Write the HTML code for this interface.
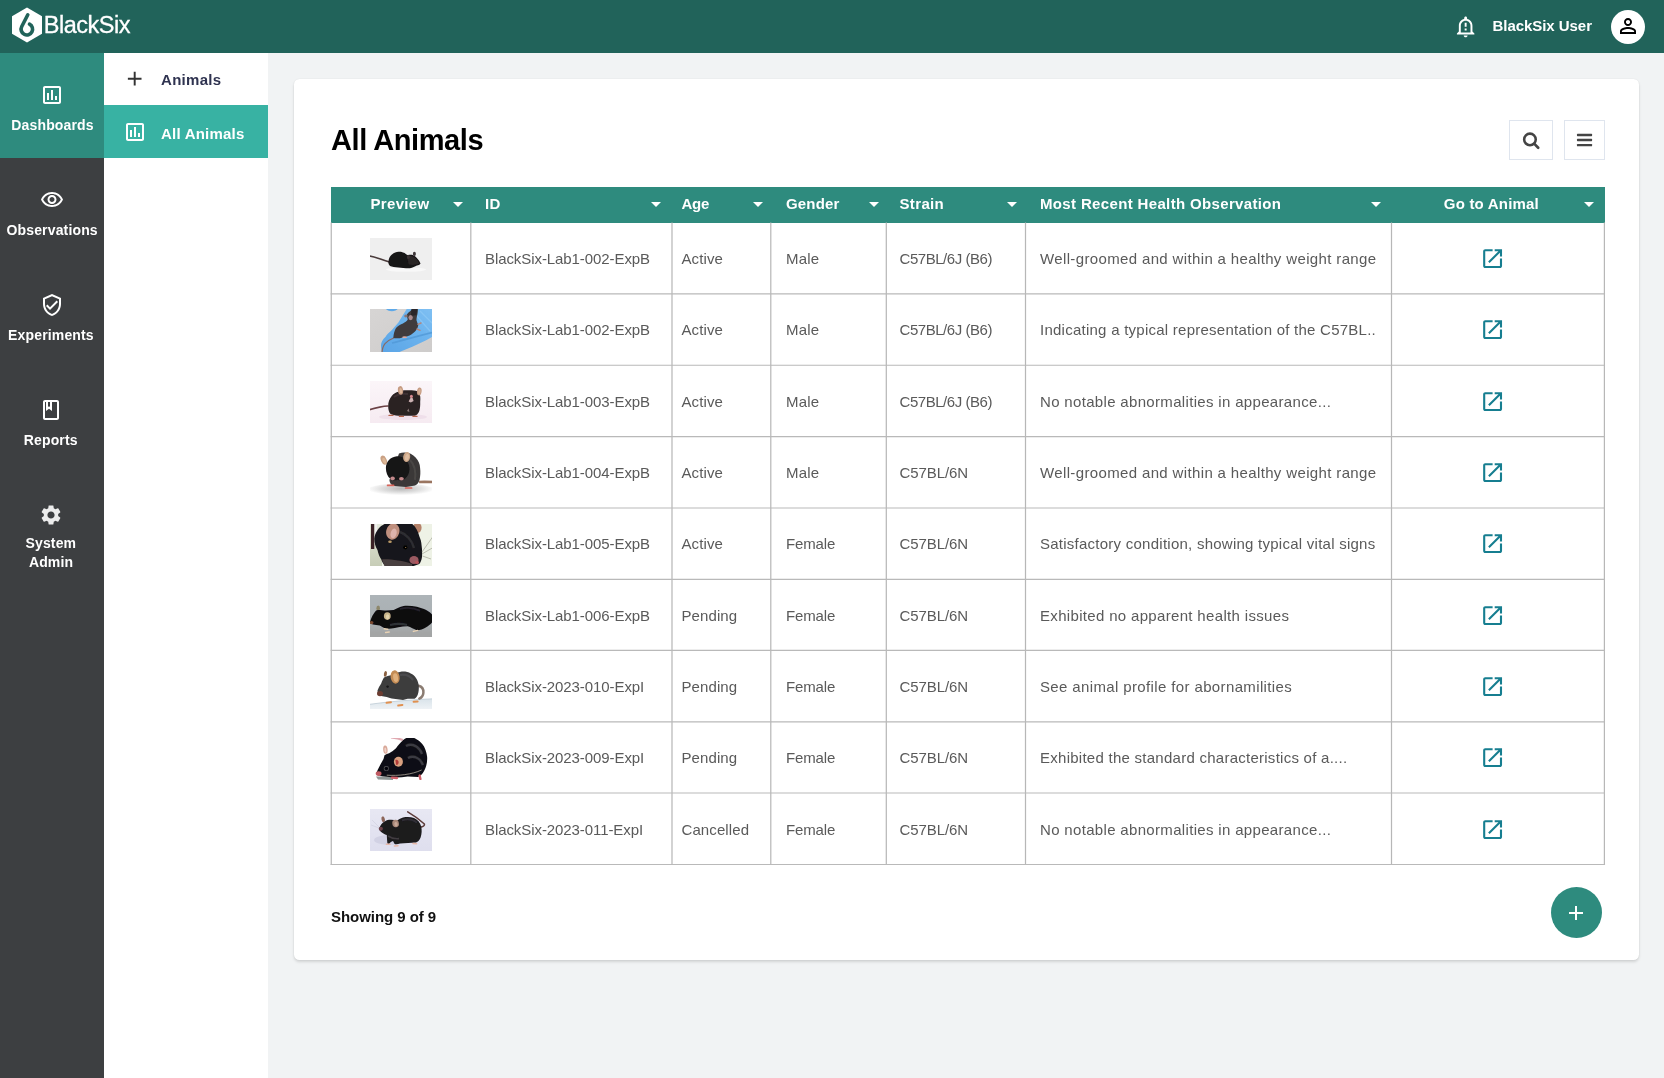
<!DOCTYPE html>
<html lang="en">
<head>
<meta charset="utf-8">
<title>BlackSix - All Animals</title>
<style>
*{box-sizing:border-box;margin:0;padding:0}
html,body{width:1664px;height:1078px;overflow:hidden}
body{background:#f1f3f4;font-family:"Liberation Sans","DejaVu Sans",sans-serif;color:#555;position:relative}
.abs{position:absolute}
body>*{opacity:.999}
/* top bar */
#top{position:absolute;left:0;top:0;width:1664px;height:52.5px;background:#21635a}
#brand{position:absolute;left:43.8px;top:10px;font-size:23.5px;line-height:30px;color:#fff;letter-spacing:-.5px;white-space:nowrap;-webkit-text-stroke:.3px #fff}
#user{position:absolute;left:1492.5px;top:14.7px;font-size:15px;line-height:22px;font-weight:bold;color:#fff;white-space:nowrap;letter-spacing:-.05px}
#avatar{position:absolute;left:1610.7px;top:9.8px;width:34px;height:34px;border-radius:50%;background:#fff}
/* left rail */
#rail{position:absolute;left:0;top:52.5px;width:103.5px;height:1026px;background:#3d3f41}
.ri{position:absolute;left:0;width:103.5px;height:105.1px;color:#fff;text-align:center;font-weight:bold;font-size:14px}
.ri.on{background:#2e8b7e}
.ri svg{position:absolute;left:50%;transform:translateX(-50%)}
.ri span{position:absolute;left:.8px;width:103.5px;text-align:center;line-height:19px;white-space:nowrap;letter-spacing:.15px}
/* sub nav */
#sub{position:absolute;left:103.5px;top:52.5px;width:164.5px;height:1026px;background:#fff}
.si{position:absolute;left:0;width:164.5px;height:52.9px;font-weight:bold;font-size:15px;color:#2f3350}
.si.on{background:#38b2a3;color:#fff}
.si span{position:absolute;left:57.5px;top:17px;line-height:22px;white-space:nowrap;letter-spacing:.3px}
/* card */
#card{position:absolute;left:294px;top:79.25px;width:1344.6px;height:881px;background:#fff;border-radius:5.5px;box-shadow:0 2px 3px rgba(0,0,0,.13),0 0 1.5px rgba(0,0,0,.10)}
#title{position:absolute;left:331px;top:120.5px;font-size:29px;line-height:38px;font-weight:bold;color:#000;letter-spacing:-.43px;white-space:nowrap}
.btn{position:absolute;top:120px;height:39.5px;border:1px solid #dfe5ee;background:#fff}
/* table */
#thead{position:absolute;left:330.6px;top:186.5px;width:1274.3px;height:36.3px;background:#2e8b7e}
.th{position:absolute;top:186px;height:36.5px;line-height:35px;color:#fff;font-weight:bold;font-size:15px;white-space:nowrap;letter-spacing:.35px}
.car{position:absolute;top:201.5px;width:0;height:0;border-left:5px solid transparent;border-right:5px solid transparent;border-top:5px solid #fff}
.vl{position:absolute;top:222.5px;width:1px;height:642.3px;background:#b9b9b9}
.hl{position:absolute;left:330.8px;width:1274.1px;height:1px;background:#b9b9b9}
.td{position:absolute;font-size:15px;line-height:22px;color:#5a5a5a;white-space:nowrap}
.th svg,.td svg{display:block}
.thumb{position:absolute;left:370px;width:61.8px;height:42.4px;overflow:hidden}
.go{position:absolute;left:1480px;width:25.2px;height:25.2px}
#showing{position:absolute;left:331px;top:905.6px;font-size:15px;line-height:22px;font-weight:bold;color:#111;white-space:nowrap;letter-spacing:-.05px}
#fab{position:absolute;left:1550.6px;top:886.7px;width:51.4px;height:51.4px;border-radius:50%;background:#2e8b7e}
</style>
</head>
<body>
<div id="top">
  <svg class="abs" style="left:11.35px;top:6px" width="32" height="38" viewBox="0 0 32 38"><polygon points="16,1.5 31,10.2 31,27.8 16,36.5 1,27.8 1,10.2" fill="#fff"/><path d="M16.78 8.8 L10.75 20.5 A5.75 5.75 0 1 0 18.5 18.1" fill="none" stroke="#21635a" stroke-width="3.6" stroke-linecap="round" stroke-linejoin="round"/></svg>
  <div id="brand">BlackSix</div>
  <svg width="23.3" height="23.3" viewBox="0 0 24 24" style="position:absolute;left:1453.7px;top:15px"><path fill="#fff" d="M10.01 21.01c0 1.1.89 1.99 1.99 1.99s1.99-.89 1.99-1.99h-3.98zM12 6c2.76 0 5 2.24 5 5v7H7v-7c0-2.76 2.24-5 5-5zm0-4.5c-.83 0-1.5.67-1.5 1.5v1.17C7.36 4.85 5 7.65 5 11v6l-2 2v1h18v-1l-2-2v-6c0-3.35-2.36-6.15-5.5-6.83V3c0-.83-.67-1.5-1.5-1.5zM11 8h2v4h-2zm0 6h2v2h-2z"/></svg>
  <div id="user">BlackSix User</div>
  <div id="avatar"><svg width="24" height="24" viewBox="0 0 24 24" style="position:absolute;left:5.2px;top:4.5px"><path fill="#000" d="M12 5.9c1.16 0 2.1.94 2.1 2.1s-.94 2.1-2.1 2.1S9.9 9.16 9.9 8s.94-2.1 2.1-2.1m0 9c2.97 0 6.1 1.46 6.1 2.1v1.1H5.9V17c0-.64 3.13-2.1 6.1-2.1M12 4C9.79 4 8 5.79 8 8s1.79 4 4 4 4-1.79 4-4-1.79-4-4-4zm0 9c-2.67 0-8 1.34-8 4v3h16v-3c0-2.66-5.33-4-8-4z"/></svg></div>
</div>
<div id="rail">
  <div class="ri on" style="top:0px"><svg width="24" height="24" viewBox="0 0 24 24" style="top:30.2px;margin-left:0px"><path fill="#fff" d="M9 17H7v-7h2v7zm4 0h-2V7h2v10zm4 0h-2v-4h2v4zm2 2H5V5h14v14zm0-16H5c-1.1 0-2 .9-2 2v14c0 1.1.9 2 2 2h14c1.1 0 2-.9 2-2V5c0-1.1-.9-2-2-2z"/></svg><span style="top:63.8px;left:0.8px">Dashboards</span></div>
<div class="ri" style="top:105px"><svg width="24" height="24" viewBox="0 0 24 24" style="top:30.2px;margin-left:0px"><path fill="#fff" d="M12 6c3.79 0 7.17 2.13 8.82 5.5C19.17 14.87 15.79 17 12 17s-7.17-2.13-8.82-5.5C4.83 8.13 8.21 6 12 6m0-2C7 4 2.73 7.11 1 11.5 2.73 15.89 7 19 12 19s9.27-3.11 11-7.5C21.27 7.11 17 4 12 4zm0 5c1.38 0 2.5 1.12 2.5 2.5S13.38 14 12 14s-2.5-1.12-2.5-2.5S10.62 9 12 9m0-2c-2.48 0-4.5 2.02-4.5 4.5S9.52 16 12 16s4.5-2.02 4.5-4.5S14.48 7 12 7z"/></svg><span style="top:63.8px;left:0.4px">Observations</span></div>
<div class="ri" style="top:210px"><svg width="24" height="24" viewBox="0 0 24 24" style="top:30.2px;margin-left:0px"><path fill="#fff" d="M12 1L3 5v6c0 5.55 3.84 10.74 9 12 5.16-1.26 9-6.45 9-12V5l-9-4zm7 10c0 4.52-2.98 8.69-7 9.93-4.02-1.24-7-5.41-7-9.93V6.3l7-3.11 7 3.11V11zm-11.59.59L6 13l4 4 8-8-1.41-1.42L10 14.17z"/></svg><span style="top:63.8px;left:-0.8px">Experiments</span></div>
<div class="ri" style="top:315px"><svg width="24" height="24" viewBox="0 0 24 24" style="top:30.2px;margin-left:-0.8px"><path fill="#fff" d="M18 2H6c-1.1 0-2 .9-2 2v16c0 1.1.9 2 2 2h12c1.1 0 2-.9 2-2V4c0-1.1-.9-2-2-2zM9 4h2v5l-1-.75L9 9V4zm9 16H6V4h1v9l3-2.25L13 13V4h5v16z"/></svg><span style="top:63.8px;left:-1.0px">Reports</span></div>
<div class="ri" style="top:420px"><svg width="24" height="24" viewBox="0 0 24 24" style="top:30.2px;margin-left:-0.7px"><path fill="#ececec" d="M19.14 12.94c.04-.3.06-.61.06-.94 0-.32-.02-.64-.07-.94l2.03-1.58c.18-.14.23-.41.12-.61l-1.92-3.32c-.12-.22-.37-.29-.59-.22l-2.39.96c-.5-.38-1.03-.7-1.62-.94l-.36-2.54c-.04-.24-.24-.41-.48-.41h-3.84c-.24 0-.43.17-.47.41l-.36 2.54c-.59.24-1.13.57-1.62.94l-2.39-.96c-.22-.08-.47 0-.59.22L2.74 8.87c-.12.21-.08.47.12.61l2.03 1.58c-.05.3-.09.63-.09.94s.02.64.07.94l-2.03 1.58c-.18.14-.23.41-.12.61l1.92 3.32c.12.22.37.29.59.22l2.39-.96c.5.38 1.03.7 1.62.94l.36 2.54c.05.24.24.41.48.41h3.84c.24 0 .44-.17.47-.41l.36-2.54c.59-.24 1.13-.56 1.62-.94l2.39.96c.22.08.47 0 .59-.22l1.92-3.32c.12-.22.07-.47-.12-.61l-2.01-1.58zM12 15.6c-1.98 0-3.6-1.62-3.6-3.6s1.62-3.6 3.6-3.6 3.6 1.62 3.6 3.6-1.62 3.6-3.6 3.6z"/></svg><span style="top:61.9px;left:-0.9px">System</span><span style="top:80.3px;left:-0.7px">Admin</span></div>

</div>
<div id="sub">
  <div class="si" style="top:0"><svg width="23.4" height="23.4" viewBox="0 0 24 24" style="position:absolute;left:19.5px;top:14.9px"><path fill="#333" d="M19 13h-6v6h-2v-6H5v-2h6V5h2v6h6v2z"/></svg><span style="top:16.2px">Animals</span></div>
<div class="si on" style="top:52.5px"><svg width="24" height="24" viewBox="0 0 24 24" style="position:absolute;left:19px;top:15px"><path fill="#fff" d="M9 17H7v-7h2v7zm4 0h-2V7h2v10zm4 0h-2v-4h2v4zm2 2H5V5h14v14zm0-16H5c-1.1 0-2 .9-2 2v14c0 1.1.9 2 2 2h14c1.1 0 2-.9 2-2V5c0-1.1-.9-2-2-2z"/></svg><span style="top:17.5px;letter-spacing:.22px">All Animals</span></div>

</div>
<div id="card"></div>
<div id="title">All Animals</div>
<div class="btn" style="left:1509.4px;width:43.3px"><svg width="24" height="24" viewBox="0 0 24 24" style="position:absolute;left:8.4px;top:6.3px"><circle cx="10.95" cy="12.4" r="5.8" fill="none" stroke="#444" stroke-width="2.55"/><path d="M15.4 16.9 L19.2 20.7" stroke="#444" stroke-width="2.7" stroke-linecap="round"/></svg></div>
<div class="btn" style="left:1564.4px;width:40.6px"><svg width="24" height="24" viewBox="0 0 24 24" style="position:absolute;left:6.9px;top:6.6px"><g fill="#444"><rect x="4.95" y="5.8" width="15.15" height="2.35" rx=".6"/><rect x="4.95" y="10.85" width="15.15" height="2.35" rx=".6"/><rect x="4.95" y="15.9" width="15.15" height="2.35" rx=".6"/></g></svg></div>
<div id="thead"></div>
<div class="th" style="left:370.4px;letter-spacing:0.35px">Preview</div><div class="car" style="left:453px"></div>
<div class="th" style="left:485px;letter-spacing:0.35px">ID</div><div class="car" style="left:651px"></div>
<div class="th" style="left:681.5px;letter-spacing:-0.3px">Age</div><div class="car" style="left:753px"></div>
<div class="th" style="left:786px;letter-spacing:0.18px">Gender</div><div class="car" style="left:868.5px"></div>
<div class="th" style="left:899.5px;letter-spacing:0.35px">Strain</div><div class="car" style="left:1006.5px"></div>
<div class="th" style="left:1040px;letter-spacing:0.35px">Most Recent Health Observation</div><div class="car" style="left:1371px"></div>
<div class="th" style="left:1443.8px;letter-spacing:0.2px">Go to Animal</div><div class="car" style="left:1583.5px"></div>
<svg class="abs" style="left:0;top:0;pointer-events:none" width="1664" height="1078" viewBox="0 0 1664 1078"><path d="M331.25 222.6V865.1M470.82 222.6V865.1M672.0 222.6V865.1M770.8 222.6V865.1M886.3 222.6V865.1M1025.5 222.6V865.1M1391.5 222.6V865.1M1604.4 222.6V865.1" fill="none" stroke="#b7b7b7" stroke-width="1.22"/><path d="M330.6 293.85H1605.0500000000002M330.6 365.25H1605.0500000000002M330.6 436.65H1605.0500000000002M330.6 508.0H1605.0500000000002M330.6 579.45H1605.0500000000002M330.6 650.3H1605.0500000000002M330.6 721.85H1605.0500000000002M330.6 793.0H1605.0500000000002M330.6 864.5H1605.0500000000002" fill="none" stroke="#b9b9b9" stroke-width="1.2"/></svg>
<div class="thumb" style="top:238.05px"><svg width="62" height="42.4" viewBox="0 0 62 42.4" preserveAspectRatio="none"><defs><filter id="b1" filterUnits="userSpaceOnUse" x="-6" y="-6" width="74" height="54.4"><feGaussianBlur stdDeviation="0.45"/></filter></defs><g filter="url(#b1)"><rect x="-6" y="-6" width="74" height="54.4" fill="#efefef"/><ellipse cx="36" cy="31.6" rx="20" ry="2.2" fill="#f8f8f8"/><path d="M-3 17.4 C6 18.6 11 21.6 18.8 23.8" fill="none" stroke="#4a3b3b" stroke-width="1.7" stroke-linecap="round"/><path d="M18.4 23.9 C18.6 20 20.6 17.6 22 16.6 C24 14.6 26.4 13.7 28.6 13.7 C30.6 13.6 32.6 14 34 14.8 C35.4 15.6 36.2 16.6 37.4 16.9 C39 17 41 16.6 42.6 16.9 C44.8 17.6 46.2 19.2 47.2 20.4 C48.8 22 50 24 50.5 25.6 C50.2 26.8 48.6 27.4 46.9 27.6 C45 28.8 42.6 29.8 40 30.2 C36 30.4 32 29.6 28.4 29.4 C25 29.2 22 28.8 20 27.9 C18.8 26.8 18.3 25.4 18.4 23.9Z" fill="#151214"/><path d="M37 18 C40 17.4 44 18.4 47 21.4 C48 23 49 24.6 49.6 25.6 C47 27 42 27.4 38.6 26.6Z" fill="#2a2526"/><ellipse cx="44.4" cy="15.9" rx="1.5" ry="2.1" fill="#3c3537"/><ellipse cx="38.4" cy="19" rx="1.6" ry="2" fill="#3a3133"/></g></svg></div><div class="td" style="left:485px;top:248.10px;letter-spacing:-.08px">BlackSix-Lab1-002-ExpB</div><div class="td" style="left:681.5px;top:248.10px;letter-spacing:.1px">Active</div><div class="td" style="left:786px;top:248.10px;letter-spacing:0.2px">Male</div><div class="td" style="left:899.5px;top:248.10px;letter-spacing:-0.45px">C57BL/6J (B6)</div><div class="td" style="left:1040px;top:248.10px;letter-spacing:0.36px">Well-groomed and within a healthy weight range</div><div class="go" style="top:245.85px"><svg width="25.2" height="25.2" viewBox="0 0 24 24" style=""><path fill="#167e90" d="M19 19H5V5h7V3H5c-1.11 0-2 .9-2 2v14c0 1.1.89 2 2 2h14c1.1 0 2-.9 2-2v-7h-2v7zM14 3v2h3.59l-9.83 9.83 1.41 1.41L19 6.41V10h2V3h-7z"/></svg></div>
<div class="thumb" style="top:309.42px"><svg width="62" height="42.4" viewBox="0 0 62 42.4" preserveAspectRatio="none"><defs><filter id="b2" filterUnits="userSpaceOnUse" x="-6" y="-6" width="74" height="54.4"><feGaussianBlur stdDeviation="0.45"/></filter><linearGradient id="g2" x1="0" y1="0" x2="1" y2="1"><stop offset="0" stop-color="#d8d6d5"/><stop offset="1" stop-color="#cdcbca"/></linearGradient><linearGradient id="gl2" x1="0" y1="1" x2="1" y2="0"><stop offset="0" stop-color="#5aa4e6"/><stop offset=".6" stop-color="#6db4ee"/><stop offset="1" stop-color="#84c3f4"/></linearGradient></defs><g filter="url(#b2)"><rect x="-6" y="-6" width="74" height="54.4" fill="url(#g2)"/><path d="M15.9 -3 L27.6 -3 L27.6 0 C26.6 2 19.6 3.6 15.9 0Z" fill="#5ea9e8"/><path d="M36.7 0 L38.5 -4 L67 -4 L67 25.4 L62 28 L56.2 31.2 L42.3 37.7 L30.7 42.4 L22 46.4 L11.9 46.4 L11.7 42.4 C10.9 39 10.9 36 11.2 34.4 C12 31.6 13.6 29.6 15.4 27.9 C17 25.4 19.4 23.2 21.9 21 C24 18.4 26.2 15.8 28.4 13.5 C31 9 34 4.4 36.7 0Z" fill="url(#gl2)"/><path d="M22 34 C32 31.6 48 27 66 22.6" fill="none" stroke="#4f97d6" stroke-width="1.6" opacity=".75"/><path d="M50 2 L62 14 M46 6 L60 22" stroke="#9ad0f8" stroke-width="1.2" opacity=".5"/><path d="M23.6 29 C20 30.4 17 32.4 15 34.6 C13 37 12 39.6 12 45" fill="none" stroke="#8a6a64" stroke-width="1.2" stroke-linecap="round"/><path d="M23.3 28.9 C23.6 25 24.6 21.6 26 19.1 C28 16.8 30.6 15.6 33 14.5 C35 13.4 36.8 12.2 37.7 10.8 C37.6 9.4 37.2 8.2 36.7 7 C36.2 6 37.6 4 40.4 1.9 L42.3 0 L42.3 -4 L47.9 -4 L47.9 0 C48 2 47.6 4 47.4 5.2 C47 7 46.4 9.4 46.5 11.2 C47 13 47.6 14.6 48.3 15.9 C48 17.6 47.6 19 46.9 20 C45.6 22 44 23.6 42.3 24.7 C40.6 26 38.6 27 36.7 27.5 C35 28.2 33.6 28.4 32.6 28.4 C29.6 29.4 26 29.6 23.3 28.9Z" fill="#3f3b3d"/><path d="M41.6 -3 L47.4 -3 L46.6 6 L41 7Z" fill="#2a2729"/><ellipse cx="40.6" cy="8.6" rx="2.2" ry="2.6" fill="#a88a8e"/><ellipse cx="35.9" cy="6.9" rx="1.7" ry="1.5" fill="#8a7478"/><path d="M48 15.4 L51 14 M47 20 L50 21.4" stroke="#b9857a" stroke-width="1.4" stroke-linecap="round"/><ellipse cx="34.6" cy="28.2" rx="2.4" ry=".9" fill="#d9a8a0"/></g></svg></div><div class="td" style="left:485px;top:319.40px;letter-spacing:-.08px">BlackSix-Lab1-002-ExpB</div><div class="td" style="left:681.5px;top:319.40px;letter-spacing:.1px">Active</div><div class="td" style="left:786px;top:319.40px;letter-spacing:0.2px">Male</div><div class="td" style="left:899.5px;top:319.40px;letter-spacing:-0.45px">C57BL/6J (B6)</div><div class="td" style="left:1040px;top:319.40px;letter-spacing:0.25px">Indicating a typical representation of the C57BL..</div><div class="go" style="top:317.21px"><svg width="25.2" height="25.2" viewBox="0 0 24 24" style=""><path fill="#167e90" d="M19 19H5V5h7V3H5c-1.11 0-2 .9-2 2v14c0 1.1.89 2 2 2h14c1.1 0 2-.9 2-2v-7h-2v7zM14 3v2h3.59l-9.83 9.83 1.41 1.41L19 6.41V10h2V3h-7z"/></svg></div>
<div class="thumb" style="top:380.79px"><svg width="62" height="42.4" viewBox="0 0 62 42.4" preserveAspectRatio="none"><defs><filter id="b3" filterUnits="userSpaceOnUse" x="-6" y="-6" width="74" height="54.4"><feGaussianBlur stdDeviation="0.45"/></filter><linearGradient id="g3" x1="0" y1="0" x2="0" y2="1"><stop offset="0" stop-color="#fcf7fa"/><stop offset="1" stop-color="#f5e9f0"/></linearGradient></defs><g filter="url(#b3)"><rect x="-6" y="-6" width="74" height="54.4" fill="url(#g3)"/><ellipse cx="33" cy="36" rx="24" ry="3" fill="#efdfea"/><path d="M-3 29.4 C5 27 11 25.2 18 25" fill="none" stroke="#6b4144" stroke-width="1.5" stroke-linecap="round"/><path d="M18.2 25.5 C18 21 19.6 17.4 21.9 14.8 C23.6 12.6 26 11.2 28.4 10.7 C32 9 36 9 40 9.3 C44 9 47.4 9.8 49 11.6 C50.4 14 50.6 17.6 50.2 20.9 C50.4 24 50 27.4 49.3 30.1 C48.4 32.6 46.6 34.4 44.6 34.8 L28.4 34.8 C25 34.6 22 33.8 20 32.5 C18.8 30.6 18.2 28 18.2 25.5Z" fill="#2b2123"/><path d="M24 16 C28 13 34 12.4 38 13" fill="none" stroke="#46383a" stroke-width="2" opacity=".7"/><ellipse cx="30.5" cy="9.4" rx="2.6" ry="4.3" fill="#c59b82" transform="rotate(-8 30.5 9.4)"/><ellipse cx="30.8" cy="9.8" rx="1.3" ry="2.8" fill="#ddb89c" transform="rotate(-8 30.8 9.8)"/><ellipse cx="49.3" cy="10.4" rx="2.3" ry="4" fill="#c59b82" transform="rotate(8 49.3 10.4)"/><ellipse cx="49.4" cy="10.6" rx="1.1" ry="2.6" fill="#d8b096" transform="rotate(8 49.4 10.6)"/><ellipse cx="41.4" cy="15.4" rx="1.5" ry="1.7" fill="#d88a90"/><path d="M38.6 20.4 L40.6 16.8 L42.6 17 L43.6 20 L40.8 21.6Z" fill="#cdb3b3"/><path d="M37 30 L38.6 27.6 L39.4 31Z" fill="#8a7878"/><path d="M19 34.4 h4 M29.4 35.4 h4 M43 35.4 h4" stroke="#b4644c" stroke-width="1.3" stroke-linecap="round"/></g></svg></div><div class="td" style="left:485px;top:390.70px;letter-spacing:-.08px">BlackSix-Lab1-003-ExpB</div><div class="td" style="left:681.5px;top:390.70px;letter-spacing:.1px">Active</div><div class="td" style="left:786px;top:390.70px;letter-spacing:0.2px">Male</div><div class="td" style="left:899.5px;top:390.70px;letter-spacing:-0.45px">C57BL/6J (B6)</div><div class="td" style="left:1040px;top:390.70px;letter-spacing:0.33px">No notable abnormalities in appearance...</div><div class="go" style="top:388.57px"><svg width="25.2" height="25.2" viewBox="0 0 24 24" style=""><path fill="#167e90" d="M19 19H5V5h7V3H5c-1.11 0-2 .9-2 2v14c0 1.1.89 2 2 2h14c1.1 0 2-.9 2-2v-7h-2v7zM14 3v2h3.59l-9.83 9.83 1.41 1.41L19 6.41V10h2V3h-7z"/></svg></div>
<div class="thumb" style="top:452.16px"><svg width="62" height="42.4" viewBox="0 0 62 42.4" preserveAspectRatio="none"><defs><filter id="b4" filterUnits="userSpaceOnUse" x="-6" y="-6" width="74" height="54.4"><feGaussianBlur stdDeviation="0.45"/></filter><radialGradient id="s4" cx=".5" cy=".4" r=".5"><stop offset="0" stop-color="#b8b8b8"/><stop offset=".55" stop-color="#dedede"/><stop offset="1" stop-color="#ffffff"/></radialGradient></defs><g filter="url(#b4)"><rect x="-6" y="-6" width="74" height="54.4" fill="#ffffff"/><ellipse cx="31" cy="38" rx="34" ry="6.5" fill="url(#s4)"/><path d="M49 30 C53 29.6 58 29.8 66 30.1" fill="none" stroke="#9a7560" stroke-width="2.7"/><path d="M29 1.4 C35 -.8 42 1 45.6 5.6 C48.6 9 49.9 12 50.1 16 C50.6 20 50.4 24 49.6 27.6 C48.8 30.6 47.6 32.4 45 33.6 L36 35 L24 34 C21 33 19.6 31 19.4 28Z" fill="#3a3838"/><path d="M40 8 C44 12 46 20 45 28" fill="none" stroke="#55504e" stroke-width="2" opacity=".6"/><ellipse cx="13.8" cy="8.2" rx="2.8" ry="4.8" fill="#c9a184" transform="rotate(-24 13.8 8.2)"/><ellipse cx="14.3" cy="8.8" rx="1.5" ry="3.2" fill="#ddb897" transform="rotate(-24 14.3 8.8)"/><path d="M15.9 16 C15.9 10 20.4 4.6 27 4.2 C33.6 4 39 9 39.4 15.6 C39.8 21 37.6 25.4 34 27.4 C31.6 28.6 29 28.6 27.4 27.8 C25.6 28.6 22.6 28.6 20.6 27 C17.4 24.6 15.9 20.4 15.9 16Z" fill="#161417"/><ellipse cx="36.7" cy="5" rx="3.5" ry="5" fill="#cda788" transform="rotate(10 36.7 5)"/><ellipse cx="37" cy="5.4" rx="1.9" ry="3.4" fill="#dfbea2" transform="rotate(10 37 5.4)"/><ellipse cx="22.6" cy="26.4" rx="2.3" ry="1.8" fill="#c48a8c"/><ellipse cx="31.4" cy="26.8" rx="2.4" ry="1.8" fill="#c48a8c"/><path d="M17.6 33.4 h6 M35.6 36 h6" stroke="#d9655a" stroke-width="1.7" stroke-linecap="round"/></g></svg></div><div class="td" style="left:485px;top:462.00px;letter-spacing:-.08px">BlackSix-Lab1-004-ExpB</div><div class="td" style="left:681.5px;top:462.00px;letter-spacing:.1px">Active</div><div class="td" style="left:786px;top:462.00px;letter-spacing:0.2px">Male</div><div class="td" style="left:899.5px;top:462.00px;letter-spacing:-0.08px">C57BL/6N</div><div class="td" style="left:1040px;top:462.00px;letter-spacing:0.36px">Well-groomed and within a healthy weight range</div><div class="go" style="top:459.93px"><svg width="25.2" height="25.2" viewBox="0 0 24 24" style=""><path fill="#167e90" d="M19 19H5V5h7V3H5c-1.11 0-2 .9-2 2v14c0 1.1.89 2 2 2h14c1.1 0 2-.9 2-2v-7h-2v7zM14 3v2h3.59l-9.83 9.83 1.41 1.41L19 6.41V10h2V3h-7z"/></svg></div>
<div class="thumb" style="top:523.53px"><svg width="62" height="42.4" viewBox="0 0 62 42.4" preserveAspectRatio="none"><defs><filter id="b5" filterUnits="userSpaceOnUse" x="-6" y="-6" width="74" height="54.4"><feGaussianBlur stdDeviation="0.45"/></filter><linearGradient id="l5" x1="0" y1="0" x2="0" y2="1"><stop offset="0" stop-color="#e8ecdf"/><stop offset="1" stop-color="#c3c9b2"/></linearGradient></defs><g filter="url(#b5)"><rect x="-6" y="-6" width="74" height="54.4" fill="#eef2e6"/><rect x="-4" y="-4" width="16" height="51" fill="url(#l5)"/><rect x="1" y="-4" width="3.3" height="29" fill="#3b2327"/><rect x="4.7" y="-4" width="2.3" height="24" fill="#f0f0ee"/><ellipse cx="47.4" cy="3.8" rx="4.2" ry="5.2" fill="#b5826a"/><path d="M4.3 14.5 C5 9 8 4.6 11.2 2 L14.5 0 L14.5 -4 L42.3 -4 L42.3 0 C46 3 48.4 8 49.3 12.2 C50.6 15 51.4 18 51.6 21.4 C52.2 25 52.2 29 52 33 C51.6 36 50.6 38.4 49.3 40 L42.3 42.4 L42.3 46.4 L16 46.4 L16 42.4 C13.6 40.6 12 38 11.2 35.3 C9.4 32.6 8.2 29.6 7.5 26 C5.4 22.6 4.2 18.6 4.3 14.5Z" fill="#19161a"/><path d="M30 8 C36 10 42 16 44 24" fill="none" stroke="#3a3e42" stroke-width="2.4" opacity=".6"/><ellipse cx="22.8" cy="7.5" rx="6.6" ry="8.3" fill="#bf8f7e" transform="rotate(14 22.8 7.5)"/><ellipse cx="23.6" cy="9.4" rx="3" ry="5" fill="#ddb3ac" transform="rotate(14 23.6 9.4)"/><ellipse cx="20" cy="17.7" rx="1.8" ry="1.3" fill="#b99a68"/><circle cx="35.3" cy="23.3" r="2.1" fill="#000"/><circle cx="35.7" cy="23.5" r=".6" fill="#b08a50"/><ellipse cx="44" cy="36" rx="4.6" ry="4" fill="#9a5a62"/><ellipse cx="47" cy="38.4" rx="2" ry="1.6" fill="#b8525a"/><path d="M12 35.4 C20 35 32 36.4 42 40 L42 46.4 L16 46.4Z" fill="#4a3f40"/><path d="M52 28 L64 11 M52 30 L64 23 M52.4 32 L61 35" stroke="#9a9a8c" stroke-width=".6"/></g></svg></div><div class="td" style="left:485px;top:533.30px;letter-spacing:-.08px">BlackSix-Lab1-005-ExpB</div><div class="td" style="left:681.5px;top:533.30px;letter-spacing:.1px">Active</div><div class="td" style="left:786px;top:533.30px;letter-spacing:-0.13px">Female</div><div class="td" style="left:899.5px;top:533.30px;letter-spacing:-0.08px">C57BL/6N</div><div class="td" style="left:1040px;top:533.30px;letter-spacing:0.25px">Satisfactory condition, showing typical vital signs</div><div class="go" style="top:531.29px"><svg width="25.2" height="25.2" viewBox="0 0 24 24" style=""><path fill="#167e90" d="M19 19H5V5h7V3H5c-1.11 0-2 .9-2 2v14c0 1.1.89 2 2 2h14c1.1 0 2-.9 2-2v-7h-2v7zM14 3v2h3.59l-9.83 9.83 1.41 1.41L19 6.41V10h2V3h-7z"/></svg></div>
<div class="thumb" style="top:594.90px"><svg width="62" height="42.4" viewBox="0 0 62 42.4" preserveAspectRatio="none"><defs><filter id="b6" filterUnits="userSpaceOnUse" x="-6" y="-6" width="74" height="54.4"><feGaussianBlur stdDeviation="0.45"/></filter><linearGradient id="g6" x1="0" y1="0" x2="0" y2="1"><stop offset="0" stop-color="#aeb5b9"/><stop offset=".65" stop-color="#a9afb2"/><stop offset=".8" stop-color="#a3a5a5"/><stop offset="1" stop-color="#a3a4a4"/></linearGradient></defs><g filter="url(#b6)"><rect x="-6" y="-6" width="74" height="54.4" fill="url(#g6)"/><ellipse cx="8.2" cy="13.2" rx="1.8" ry="2.7" fill="#8d876b"/><path d="M-4 27 L0 27 C1 23 3.4 18.4 6.1 15.5 C9 14.8 12 15.2 14.5 15.5 C17.6 15.6 20.6 15.4 23.7 15.1 C25.4 14.2 27 13.4 28.4 12.8 C30.6 11.6 33 10.8 35.3 10.7 C39 10.5 43 10.9 46.9 11.8 C50 12.6 53.4 13.8 56.2 15.1 C58.4 16.2 60.4 17.8 62 19.4 L66 20.4 L66 26.6 L62 27.6 C60.4 29.6 58.4 31 56.2 32.2 C54.8 33.2 53.2 34 51.6 34.6 L47 35.6 C44 34 40.6 32.2 37.7 31.3 C34.6 31.4 31.4 31.8 28.4 32.2 C26 32.8 23.6 33.2 21.4 33.6 L16 34 C13.8 32.6 11.8 31.4 9.8 30.4 C7.4 30.2 5 29.9 2.9 29.5 C1.6 29 .6 28.6 0 28.2 L-4 28.2Z" fill="#0e0c11"/><path d="M30 14 C36 12.4 44 13 50 15.6" fill="none" stroke="#2c2a34" stroke-width="1.8" opacity=".8"/><path d="M20 30 C26 28.6 32 28.6 37 30" fill="none" stroke="#3c4246" stroke-width="2.2" opacity=".7"/><ellipse cx="17.3" cy="21.1" rx="3.4" ry="3.8" fill="#c8b48a"/><ellipse cx="17.6" cy="21.8" rx="1.7" ry="2.5" fill="#e2d2ac"/><ellipse cx="1.6" cy="27.6" rx="1.8" ry="1.6" fill="#7c4c32"/><path d="M14.2 33.8 l3.6 .4 M15.6 37.4 l3.6 -.3 M43.4 36.4 l4.4 -1" stroke="#e8d2b4" stroke-width="1.5" stroke-linecap="round"/></g></svg></div><div class="td" style="left:485px;top:604.60px;letter-spacing:-.08px">BlackSix-Lab1-006-ExpB</div><div class="td" style="left:681.5px;top:604.60px;letter-spacing:.1px">Pending</div><div class="td" style="left:786px;top:604.60px;letter-spacing:-0.13px">Female</div><div class="td" style="left:899.5px;top:604.60px;letter-spacing:-0.08px">C57BL/6N</div><div class="td" style="left:1040px;top:604.60px;letter-spacing:0.33px">Exhibited no apparent health issues</div><div class="go" style="top:602.65px"><svg width="25.2" height="25.2" viewBox="0 0 24 24" style=""><path fill="#167e90" d="M19 19H5V5h7V3H5c-1.11 0-2 .9-2 2v14c0 1.1.89 2 2 2h14c1.1 0 2-.9 2-2v-7h-2v7zM14 3v2h3.59l-9.83 9.83 1.41 1.41L19 6.41V10h2V3h-7z"/></svg></div>
<div class="thumb" style="top:666.27px"><svg width="62" height="42.4" viewBox="0 0 62 42.4" preserveAspectRatio="none"><defs><filter id="b7" filterUnits="userSpaceOnUse" x="-6" y="-6" width="74" height="54.4"><feGaussianBlur stdDeviation="0.45"/></filter><linearGradient id="f7" x1="0" y1="0" x2="0" y2="1"><stop offset="0" stop-color="#d9e3ea"/><stop offset="1" stop-color="#f6f8fa"/></linearGradient></defs><g filter="url(#b7)"><rect x="-6" y="-6" width="74" height="54.4" fill="#ffffff"/><path d="M-4 38.8 C20 35.4 44 33.4 66 32.7 L66 47 L-4 47Z" fill="url(#f7)"/><path d="M-4 38.8 C20 35.4 44 33.4 66 32.7" fill="none" stroke="#bccad4" stroke-width=".8"/><path d="M48.6 19.8 C51.6 20.6 53.6 23.4 53.4 26.6 C53.2 29.4 51.6 31.6 49.3 32.6" fill="none" stroke="#8b7c72" stroke-width="2.5" stroke-linecap="round"/><ellipse cx="15.4" cy="7.9" rx="1.5" ry="2.9" fill="#8a6040" transform="rotate(10 15.4 7.9)"/><path d="M7.5 24.5 C8.4 22 9.8 19.6 11.2 17.5 C12 15 13 13 14 11.5 C16 10.4 19 9.6 22 9 C24.6 7.4 27 6.4 29.8 5.9 C31.6 5.4 33.6 5.3 35.3 5.5 C38 6 40.4 7 42.3 8.3 C44.2 9.6 45.8 11.4 46.9 13.4 C47.9 15.4 48.6 17.6 48.8 19.9 C49 23 48.6 25.8 47.9 28.2 C47.2 30.2 46 31.8 44.6 32.8 L37.7 32.8 L33 34 L23.7 32.8 C21 32.4 18.6 31.8 16.8 31 C14.8 30.8 12.8 30.4 11.2 30 C9 29.6 7.2 27.6 7.5 24.5Z" fill="#3c3c3e"/><path d="M30 9 C35 8 40 10 43 14" fill="none" stroke="#55555a" stroke-width="2.2" opacity=".6"/><ellipse cx="25.1" cy="11" rx="4.5" ry="6.7" fill="#c48c54" transform="rotate(-10 25.1 11)"/><ellipse cx="25.6" cy="11.6" rx="2.4" ry="4.4" fill="#e0b07c" transform="rotate(-10 25.6 11.6)"/><ellipse cx="10" cy="27.6" rx="3" ry="2.6" fill="#6c3c32"/><circle cx="17.6" cy="20.6" r="1.2" fill="#141414"/><path d="M16.6 36.8 l4.4 -.6 M28.2 39.6 l4.2 -.6 M43.6 35.8 l4 -.2" stroke="#e09050" stroke-width="2" stroke-linecap="round"/></g></svg></div><div class="td" style="left:485px;top:675.90px;letter-spacing:-.08px">BlackSix-2023-010-ExpI</div><div class="td" style="left:681.5px;top:675.90px;letter-spacing:.1px">Pending</div><div class="td" style="left:786px;top:675.90px;letter-spacing:-0.13px">Female</div><div class="td" style="left:899.5px;top:675.90px;letter-spacing:-0.08px">C57BL/6N</div><div class="td" style="left:1040px;top:675.90px;letter-spacing:0.37px">See animal profile for abornamilities</div><div class="go" style="top:674.01px"><svg width="25.2" height="25.2" viewBox="0 0 24 24" style=""><path fill="#167e90" d="M19 19H5V5h7V3H5c-1.11 0-2 .9-2 2v14c0 1.1.89 2 2 2h14c1.1 0 2-.9 2-2v-7h-2v7zM14 3v2h3.59l-9.83 9.83 1.41 1.41L19 6.41V10h2V3h-7z"/></svg></div>
<div class="thumb" style="top:737.64px"><svg width="62" height="42.4" viewBox="0 0 62 42.4" preserveAspectRatio="none"><defs><filter id="b8" filterUnits="userSpaceOnUse" x="-6" y="-6" width="74" height="54.4"><feGaussianBlur stdDeviation="0.45"/></filter></defs><g filter="url(#b8)"><rect x="-6" y="-6" width="74" height="54.4" fill="#ffffff"/><path d="M21 -.6 C25 -.2 30 .8 32.8 2" fill="none" stroke="#e0a8b0" stroke-width="2"/><path d="M6 38.4 L23 38.6 L23 42 L8 41.6Z" fill="#8f9696"/><ellipse cx="15.4" cy="11.7" rx="2.2" ry="4.1" fill="#d8a898" transform="rotate(-6 15.4 11.7)"/><ellipse cx="15.4" cy="12.2" rx="1" ry="2.6" fill="#f0d2c8" transform="rotate(-6 15.4 12.2)"/><path d="M6.1 35.7 C7 33 8.4 30.4 9.8 27.8 C11 25.4 12.4 23 13.5 20.9 L14.5 17.2 C16 16.4 17.6 15.8 19.1 15.3 C21.6 13.8 24 12 26 10.2 C28 7.4 30.6 4.6 33 2.3 C34.6 1 36 .2 37.7 -.4 C41 -1.4 44 -.4 46.9 1.4 C49.8 3 52.2 5.4 53.9 8.3 C55.6 11.4 56.6 15 57.1 18.6 C57.4 21.8 57 25 56.2 27.8 C55.4 30.4 54.4 32.8 53 34.8 C51.6 36.8 50 38.2 48 39 L37.7 38.4 C33 39.2 28 39.6 23.7 39.4 L14.5 38.5 C11.4 38.2 8.2 37.4 6.1 35.7Z" fill="#111115"/><path d="M36 8 C42 5 49 8 52 16 M38 20 C44 17 50 20 53 27" fill="none" stroke="#4c4c56" stroke-width="2.4" opacity=".7"/><path d="M16.8 37.2 C28 38 42 36.6 51.6 32" fill="none" stroke="#aaa098" stroke-width=".8"/><ellipse cx="28.4" cy="23.7" rx="4.5" ry="5" fill="#d8a080"/><path d="M25.4 22 C27 21 29 22.4 28.6 25 C28 26.6 27 27.4 26 26.6Z" fill="#b23a38"/><circle cx="16.3" cy="30.6" r="2.5" fill="#55555c"/><circle cx="16.3" cy="30.6" r="1.8" fill="#050507"/><ellipse cx="8.6" cy="35.6" rx="2.9" ry="2.3" fill="#c05a62"/><path d="M22 39.6 l5 .4 M49.6 37.6 l.8 3.4" stroke="#d0606a" stroke-width="2.4" stroke-linecap="round"/></g></svg></div><div class="td" style="left:485px;top:747.20px;letter-spacing:-.08px">BlackSix-2023-009-ExpI</div><div class="td" style="left:681.5px;top:747.20px;letter-spacing:.1px">Pending</div><div class="td" style="left:786px;top:747.20px;letter-spacing:-0.13px">Female</div><div class="td" style="left:899.5px;top:747.20px;letter-spacing:-0.08px">C57BL/6N</div><div class="td" style="left:1040px;top:747.20px;letter-spacing:0.26px">Exhibited the standard characteristics of a....</div><div class="go" style="top:745.37px"><svg width="25.2" height="25.2" viewBox="0 0 24 24" style=""><path fill="#167e90" d="M19 19H5V5h7V3H5c-1.11 0-2 .9-2 2v14c0 1.1.89 2 2 2h14c1.1 0 2-.9 2-2v-7h-2v7zM14 3v2h3.59l-9.83 9.83 1.41 1.41L19 6.41V10h2V3h-7z"/></svg></div>
<div class="thumb" style="top:809.01px"><svg width="62" height="42.4" viewBox="0 0 62 42.4" preserveAspectRatio="none"><defs><filter id="b9" filterUnits="userSpaceOnUse" x="-6" y="-6" width="74" height="54.4"><feGaussianBlur stdDeviation="0.45"/></filter><linearGradient id="g9" x1="0" y1="0" x2="0" y2="1"><stop offset="0" stop-color="#e9e9f4"/><stop offset="1" stop-color="#dddded"/></linearGradient></defs><g filter="url(#b9)"><rect x="-6" y="-6" width="74" height="54.4" fill="url(#g9)"/><ellipse cx="20" cy="31" rx="16" ry="5" fill="#d2d2e4"/><path d="M51.4 18 C53.4 17.4 54.8 16.4 54.4 15 C50 11 43 6 37.7 2.9" fill="none" stroke="#5c3b39" stroke-width="1.5" stroke-linecap="round" stroke-linejoin="round"/><ellipse cx="13.2" cy="10.3" rx="1.7" ry="3" fill="#8c665a" transform="rotate(-14 13.2 10.3)"/><path d="M9.4 19.4 C9.8 16.6 12 13.6 14.6 12.4 L16.8 11.2 C20 10.6 24 10.8 27 11.4 C29 10.2 31 9 33 8.4 C37 7.6 41 7.8 44 9 C47.6 10.6 50.2 13.6 51.2 17.4 C52 21 51.8 25 50.6 28.4 C49.6 30.8 48 32.6 46 33.6 L30 34.6 C28 35.2 26 35.4 24.6 35 L23 32 C21.6 32.6 20 33.4 19 35 L17.4 34.6 C17 31.6 17 28.6 16.8 26 C14.6 25.2 12 24 10.6 22.4 C9.8 21.6 9.3 20.6 9.4 19.4Z" fill="#1c1a1e"/><path d="M32 11.4 C37 9.6 43 10.4 47 13.6" fill="none" stroke="#36343c" stroke-width="1.8" opacity=".8"/><path d="M18 27 C21 29 25 30 29 29.6" fill="none" stroke="#4a4548" stroke-width="1.6" opacity=".8"/><ellipse cx="25.6" cy="14.5" rx="3.3" ry="3.7" fill="#a88878" transform="rotate(-10 25.6 14.5)"/><ellipse cx="26" cy="15.2" rx="1.6" ry="2.3" fill="#c8a898" transform="rotate(-10 26 15.2)"/><ellipse cx="10.8" cy="19.8" rx="2.1" ry="2" fill="#6c424a"/><path d="M16.4 35.3 l3.6 -.1 M24.4 37 l3.6 -.2 M43 34.6 l3.6 .1" stroke="#e8b8a8" stroke-width="1.5" stroke-linecap="round"/><path d="M9 18 L2 11 M9 19 L1 16" stroke="#c8c8d8" stroke-width=".5"/></g></svg></div><div class="td" style="left:485px;top:818.50px;letter-spacing:-.08px">BlackSix-2023-011-ExpI</div><div class="td" style="left:681.5px;top:818.50px;letter-spacing:.1px">Cancelled</div><div class="td" style="left:786px;top:818.50px;letter-spacing:-0.13px">Female</div><div class="td" style="left:899.5px;top:818.50px;letter-spacing:-0.08px">C57BL/6N</div><div class="td" style="left:1040px;top:818.50px;letter-spacing:0.33px">No notable abnormalities in appearance...</div><div class="go" style="top:816.73px"><svg width="25.2" height="25.2" viewBox="0 0 24 24" style=""><path fill="#167e90" d="M19 19H5V5h7V3H5c-1.11 0-2 .9-2 2v14c0 1.1.89 2 2 2h14c1.1 0 2-.9 2-2v-7h-2v7zM14 3v2h3.59l-9.83 9.83 1.41 1.41L19 6.41V10h2V3h-7z"/></svg></div>

<div id="showing">Showing 9 of 9</div>
<div id="fab"><svg width="24" height="24" viewBox="0 0 24 24" style="position:absolute;left:13.9px;top:14.2px"><path fill="#fff" d="M19 13h-6v6h-2v-6H5v-2h6V5h2v6h6v2z"/></svg></div>
</body>
</html>
